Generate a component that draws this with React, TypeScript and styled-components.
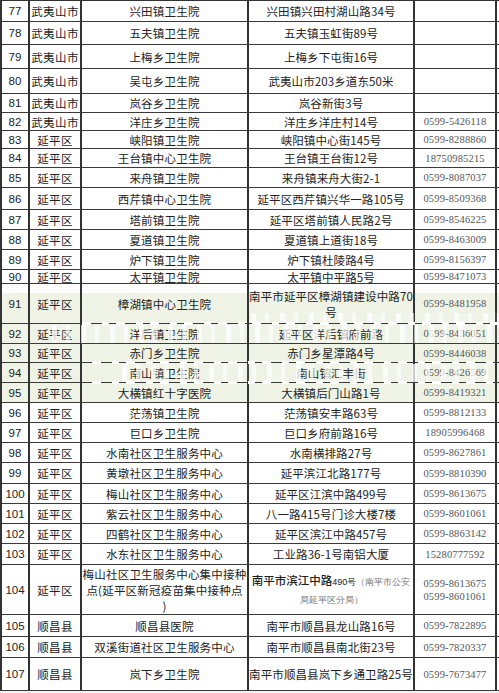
import React from 'react';
import styled, { createGlobalStyle } from 'styled-components';

const GlobalStyle = createGlobalStyle`
  html, body {
    margin: 0;
    padding: 0;
    background: #fff;
  }
  body {
    font-family: "Noto Sans CJK SC", "Liberation Sans", sans-serif;
    color: #222;
  }
`;

//#region styled component
const Page = styled.div`
  width: 499px;
  height: 693px;
  overflow: hidden;
  background: linear-gradient(#fff 690px, #f1f1f1 690px);
`;

const Sheet = styled.div`
  position: relative;
  width: 497px;
  border-left: 2px solid #333;
  border-top: 1px solid #333;
`;

const Row = styled.div<{ $h: number; $tint?: 'top' | 'full' }>`
  box-sizing: border-box;
  display: grid;
  grid-template-columns: 28px 52px 167px 166px 82px;
  height: ${({ $h }) => $h}px;
  border-bottom: 1px solid #3a3a3a;
  background: ${({ $tint }) =>
    $tint === 'full'
      ? '#eef3e6'
      : $tint === 'top'
      ? 'linear-gradient(#fff 0 9px, #eef3e6 9px)'
      : '#fff'};
`;

const Cell = styled.div`
  box-sizing: border-box;
  border-right: 2px solid #333;
  display: flex;
  align-items: center;
  justify-content: center;
  text-align: center;
  overflow: hidden;
  font-size: 11.5px;
  line-height: 16px;
  white-space: nowrap;
`;

const Index = styled(Cell)`
  font-family: "Liberation Sans", Arial, sans-serif;
  font-size: 11.5px;
`;

const Area = styled(Cell)`
  letter-spacing: 0.4px;
`;

const Name = styled(Cell)`
  letter-spacing: 0.2px;
`;

const Addr = styled(Cell)`
  letter-spacing: 0.1px;
`;

const Phone = styled(Cell)`
  font-family: "Liberation Serif", "Times New Roman", serif;
  font-size: 10.5px;
  line-height: 13px;
  color: #555;
  letter-spacing: 0.15px;
`;

const Strong = styled.span`
  font-weight: 500;
  letter-spacing: 0;
`;

const Small = styled.span`
  font-family: "Liberation Sans", Arial, sans-serif;
  font-size: 9px;
  letter-spacing: 0;
`;

const Note = styled.span`
  font-family: "Liberation Serif", serif;
  font-size: 9px;
  color: #777;
  letter-spacing: 0;
`;

const Smudge = styled.div<{ $top: number; $left: number; $h: number }>`
  position: absolute;
  top: ${({ $top }) => $top}px;
  left: ${({ $left }) => $left}px;
  right: 0;
  height: ${({ $h }) => $h}px;
  pointer-events: none;
  background: repeating-linear-gradient(
    90deg,
    rgba(255, 255, 255, 0.75) 0 5px,
    rgba(255, 255, 255, 0.1) 5px 14px,
    rgba(255, 255, 255, 0.6) 14px 18px,
    rgba(255, 255, 255, 0) 18px 29px
  );
`;

const DashBreak = styled.div<{ $top: number; $left: number }>`
  position: absolute;
  top: ${({ $top }) => $top}px;
  left: ${({ $left }) => $left}px;
  right: 0;
  height: 3px;
  pointer-events: none;
  background: repeating-linear-gradient(
    90deg,
    #fff 0 9px,
    transparent 9px 20px,
    #fff 20px 27px,
    transparent 27px 34px
  );
`;
//#endregion

type Entry = {
  no: number;
  area: string;
  name: React.ReactNode;
  addr: React.ReactNode;
  phone?: React.ReactNode;
  h: number;
  tint?: 'top' | 'full';
};

const rows: Entry[] = [
  { no: 77, area: '武夷山市', name: '兴田镇卫生院', addr: '兴田镇兴田村湖山路34号', h: 21 },
  { no: 78, area: '武夷山市', name: '五夫镇卫生院', addr: '五夫镇玉虹街89号', h: 23 },
  { no: 79, area: '武夷山市', name: '上梅乡卫生院', addr: '上梅乡下屯街16号', h: 24 },
  { no: 80, area: '武夷山市', name: '吴屯乡卫生院', addr: '武夷山市203乡道东50米', h: 25 },
  { no: 81, area: '武夷山市', name: '岚谷乡卫生院', addr: '岚谷新街3号', h: 19 },
  { no: 82, area: '武夷山市', name: '洋庄乡卫生院', addr: '洋庄乡洋庄村14号', phone: '0599-5426118', h: 18 },
  { no: 83, area: '延平区', name: '峡阳镇卫生院', addr: '峡阳镇中心街145号', phone: '0599-8288860', h: 18 },
  { no: 84, area: '延平区', name: '王台镇中心卫生院', addr: '王台镇王台街12号', phone: '18750985215', h: 19 },
  { no: 85, area: '延平区', name: '来舟镇卫生院', addr: '来舟镇来舟大街2-1', phone: '0599-8087037', h: 20 },
  { no: 86, area: '延平区', name: '西芹镇中心卫生院', addr: '延平区西芹镇兴华一路105号', phone: '0599-8509368', h: 22 },
  { no: 87, area: '延平区', name: '塔前镇卫生院', addr: '延平区塔前镇人民路2号', phone: '0599-8546225', h: 20 },
  { no: 88, area: '延平区', name: '夏道镇卫生院', addr: '夏道镇上道街18号', phone: '0599-8463009', h: 20 },
  { no: 89, area: '延平区', name: '炉下镇卫生院', addr: '炉下镇杜陵路4号', phone: '0599-8156397', h: 20 },
  { no: 90, area: '延平区', name: '太平镇卫生院', addr: '太平镇中平路5号', phone: '0599-8471073', h: 14 },
  {
    no: 91,
    area: '延平区',
    name: '樟湖镇中心卫生院',
    addr: (
      <>
        南平市延平区樟湖镇建设中路70
        <br />号
      </>
    ),
    phone: '0599-8481958',
    h: 40,
    tint: 'top',
  },
  { no: 92, area: '延平区', name: '洋后镇卫生院', addr: '延平区洋后镇府前路', phone: '0599-8436051', h: 20, tint: 'full' },
  { no: 93, area: '延平区', name: '赤门乡卫生院', addr: '赤门乡星潭路4号', phone: '0599-8446038', h: 19, tint: 'full' },
  { no: 94, area: '延平区', name: '南山镇卫生院', addr: '南山镇汇丰街', phone: '0599-8426569', h: 20, tint: 'full' },
  { no: 95, area: '延平区', name: '大横镇红十字医院', addr: '大横镇后门山路1号', phone: '0599-8419321', h: 20, tint: 'full' },
  { no: 96, area: '延平区', name: '茫荡镇卫生院', addr: '茫荡镇安丰路63号', phone: '0599-8812133', h: 20 },
  { no: 97, area: '延平区', name: '巨口乡卫生院', addr: '巨口乡府前路16号', phone: '18905996468', h: 20 },
  { no: 98, area: '延平区', name: '水南社区卫生服务中心', addr: '水南横排路27号', phone: '0599-8627861', h: 20 },
  { no: 99, area: '延平区', name: '黄墩社区卫生服务中心', addr: '延平滨江北路177号', phone: '0599-8810390', h: 21 },
  { no: 100, area: '延平区', name: '梅山社区卫生服务中心', addr: '延平区江滨中路499号', phone: '0599-8613675', h: 20 },
  { no: 101, area: '延平区', name: '紫云社区卫生服务中心', addr: '八一路415号门诊大楼7楼', phone: '0599-8601061', h: 20 },
  { no: 102, area: '延平区', name: '四鹤社区卫生服务中心', addr: '延平区滨江中路457号', phone: '0599-8863142', h: 20 },
  { no: 103, area: '延平区', name: '水东社区卫生服务中心', addr: '工业路36-1号南铝大厦', phone: '15280777592', h: 21 },
  {
    no: 104,
    area: '延平区',
    name: (
      <>
        梅山社区卫生服务中心集中接种
        <br />
        点(延平区新冠疫苗集中接种点
        <br />)
      </>
    ),
    addr: (
      <>
        <Strong>南平市滨江中路</Strong>
        <Small>490号</Small>
        <Note>（南平市公安</Note>
        <br />
        <Note>局延平区分局）</Note>
      </>
    ),
    phone: (
      <>
        0599-8613675
        <br />
        0599-8601061
      </>
    ),
    h: 50,
  },
  { no: 105, area: '顺昌县', name: '顺昌县医院', addr: '南平市顺昌县龙山路16号', phone: '0599-7822895', h: 22 },
  { no: 106, area: '顺昌县', name: '双溪街道社区卫生服务中心', addr: '南平市顺昌县南北街23号', phone: '0599-7820337', h: 21 },
  { no: 107, area: '顺昌县', name: '岚下乡卫生院', addr: '南平市顺昌县岚下乡通卫路25号', phone: '0599-7673477', h: 33 },
];

function App() {
  return (
    <Page>
      <GlobalStyle />
      <Sheet>
        {rows.map((r) => (
          <Row key={r.no} $h={r.h} $tint={r.tint}>
            <Index>{r.no}</Index>
            <Area>{r.area}</Area>
            <Name>
              <div>{r.name}</div>
            </Name>
            <Addr>
              <div>{r.addr}</div>
            </Addr>
            <Phone>
              <div>{r.phone ?? ''}</div>
            </Phone>
          </Row>
        ))}

        {/* scan artefact over rows 92 and 94 */}
        <Smudge $top={312} $left={249} $h={10} />
        <DashBreak $top={321} $left={80} />
        <Smudge $top={324} $left={50} $h={18} />
        <DashBreak $top={360} $left={90} />
        <Smudge $top={363} $left={120} $h={18} />
        <DashBreak $top={380} $left={90} />
      </Sheet>
    </Page>
  );
}

export default App;
